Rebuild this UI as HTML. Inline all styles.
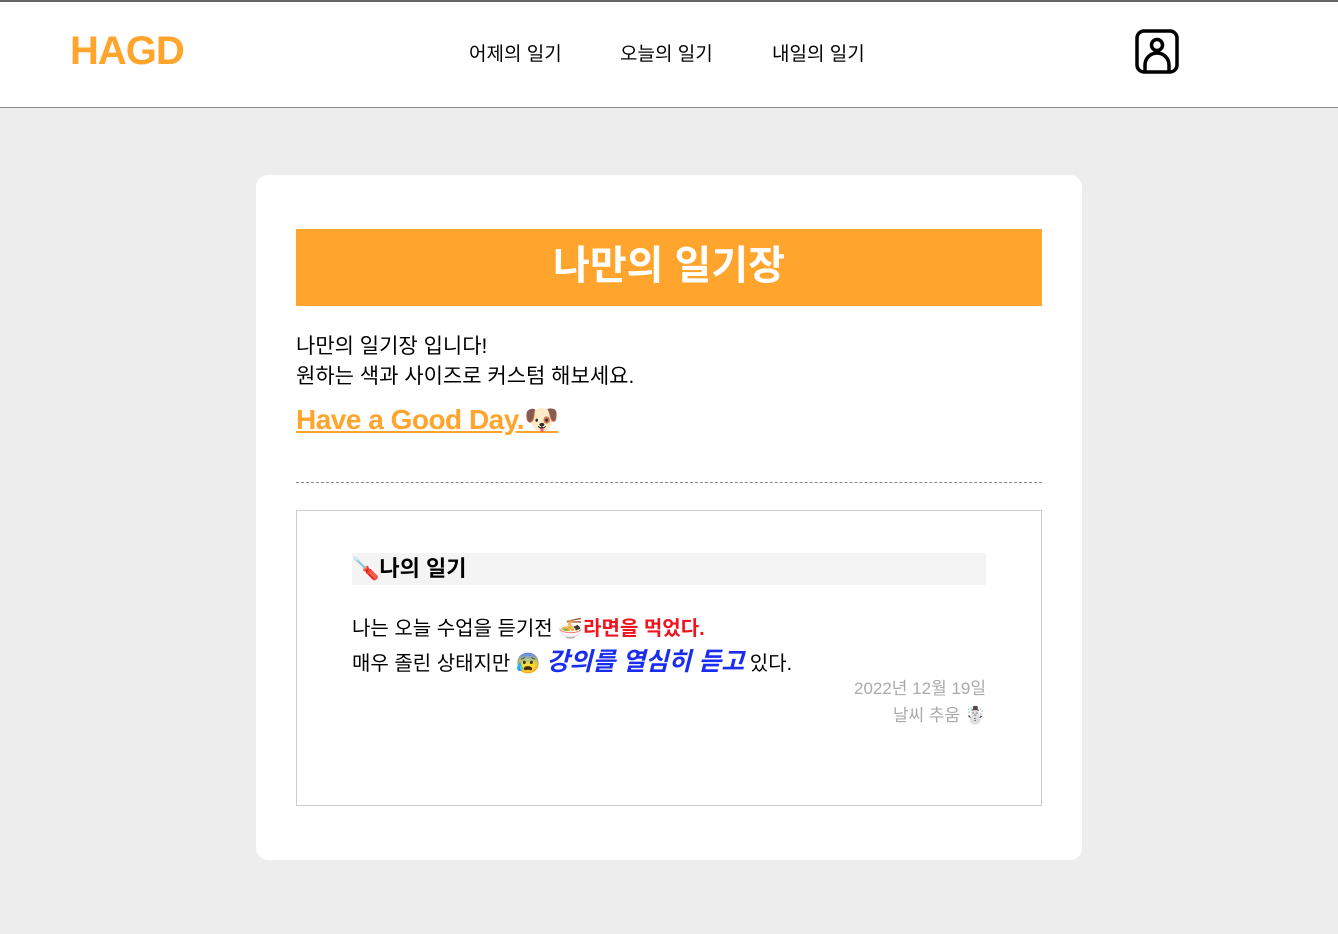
<!DOCTYPE html>
<html><head><meta charset="utf-8"><style>
body{margin:0;width:1338px;height:934px;background:#ededed;font-family:"Liberation Sans","Noto Sans CJK KR",sans-serif;overflow:hidden;position:relative;color:#000}
.hdr{position:absolute;top:0;left:0;width:1338px;height:108px;background:#fff;border-top:2px solid #666;border-bottom:1px solid #888;box-sizing:border-box}
.logo{position:absolute;left:70px;top:27px;font-size:40px;font-weight:bold;color:#ffa42c;letter-spacing:-1px}
.nav{position:absolute;top:37px;font-size:19px}
.card{position:absolute;left:256px;top:175px;width:826px;height:685px;background:#fff;border-radius:12px}
.title{position:absolute;left:40px;top:54px;width:746px;height:77px;background:#ffa42c;color:#fff;font-size:40px;font-weight:bold;text-align:center;line-height:74px}
.p{position:absolute;left:40px;font-size:21px;line-height:30px}
.hg{position:absolute;left:40px;top:228px;font-size:28px;font-weight:bold;color:#ffa42c;text-decoration:underline;letter-spacing:-0.5px}
.dash{position:absolute;left:40px;top:307px;width:746px;border-top:1px dashed #888}
.box{position:absolute;left:40px;top:335px;width:746px;height:296px;border:1px solid #ccc;box-sizing:border-box}
.h3{position:absolute;left:55px;top:42px;width:634px;height:32px;background:#f4f4f4;font-size:22px;font-weight:bold;line-height:32px}
.l{position:absolute;left:55px;font-size:20px}
.r{position:absolute;right:55px;font-size:17px;color:#aaa;text-align:right}
</style></head><body>
<div class="hdr">
<div class="logo">HAGD</div>
<div class="nav" style="left:469px">어제의 일기</div>
<div class="nav" style="left:620px">오늘의 일기</div>
<div class="nav" style="left:772px">내일의 일기</div>
<svg style="position:absolute;left:1135px;top:27px" width="44" height="46" viewBox="0 0 44 46"><rect x="2" y="2" width="40" height="41" rx="7" fill="none" stroke="#000" stroke-width="3.5"/><circle cx="22" cy="16" r="5.5" fill="none" stroke="#000" stroke-width="3.5"/><path d="M10 43 V36 A12 12 0 0 1 34 36 V43" fill="none" stroke="#000" stroke-width="3.5"/></svg>
</div>
<div class="card">
<div class="title">나만의 일기장</div>
<div class="p" style="top:157px">나만의 일기장 입니다!<br>원하는 색과 사이즈로 커스텀 해보세요.</div>
<div class="hg">Have a Good Day.🐶</div>
<div class="dash"></div>
<div class="box">
<div class="h3">🪛나의 일기</div>
<div class="l" style="top:101px">나는 오늘 수업을 듣기전 🍜<b style="color:#f0141e">라면을 먹었다.</b></div>
<div class="l" style="top:131px">매우 졸린 상태지만 😰 <b style="color:#1a2cf0;font-style:italic;font-size:25px">강의를 열심히 듣고</b> 있다.</div>
<div class="r" style="top:163px">2022년 12월 19일</div>
<div class="r" style="top:190px">날씨 추움 ☃️</div>
</div>
</div>
</body></html>
